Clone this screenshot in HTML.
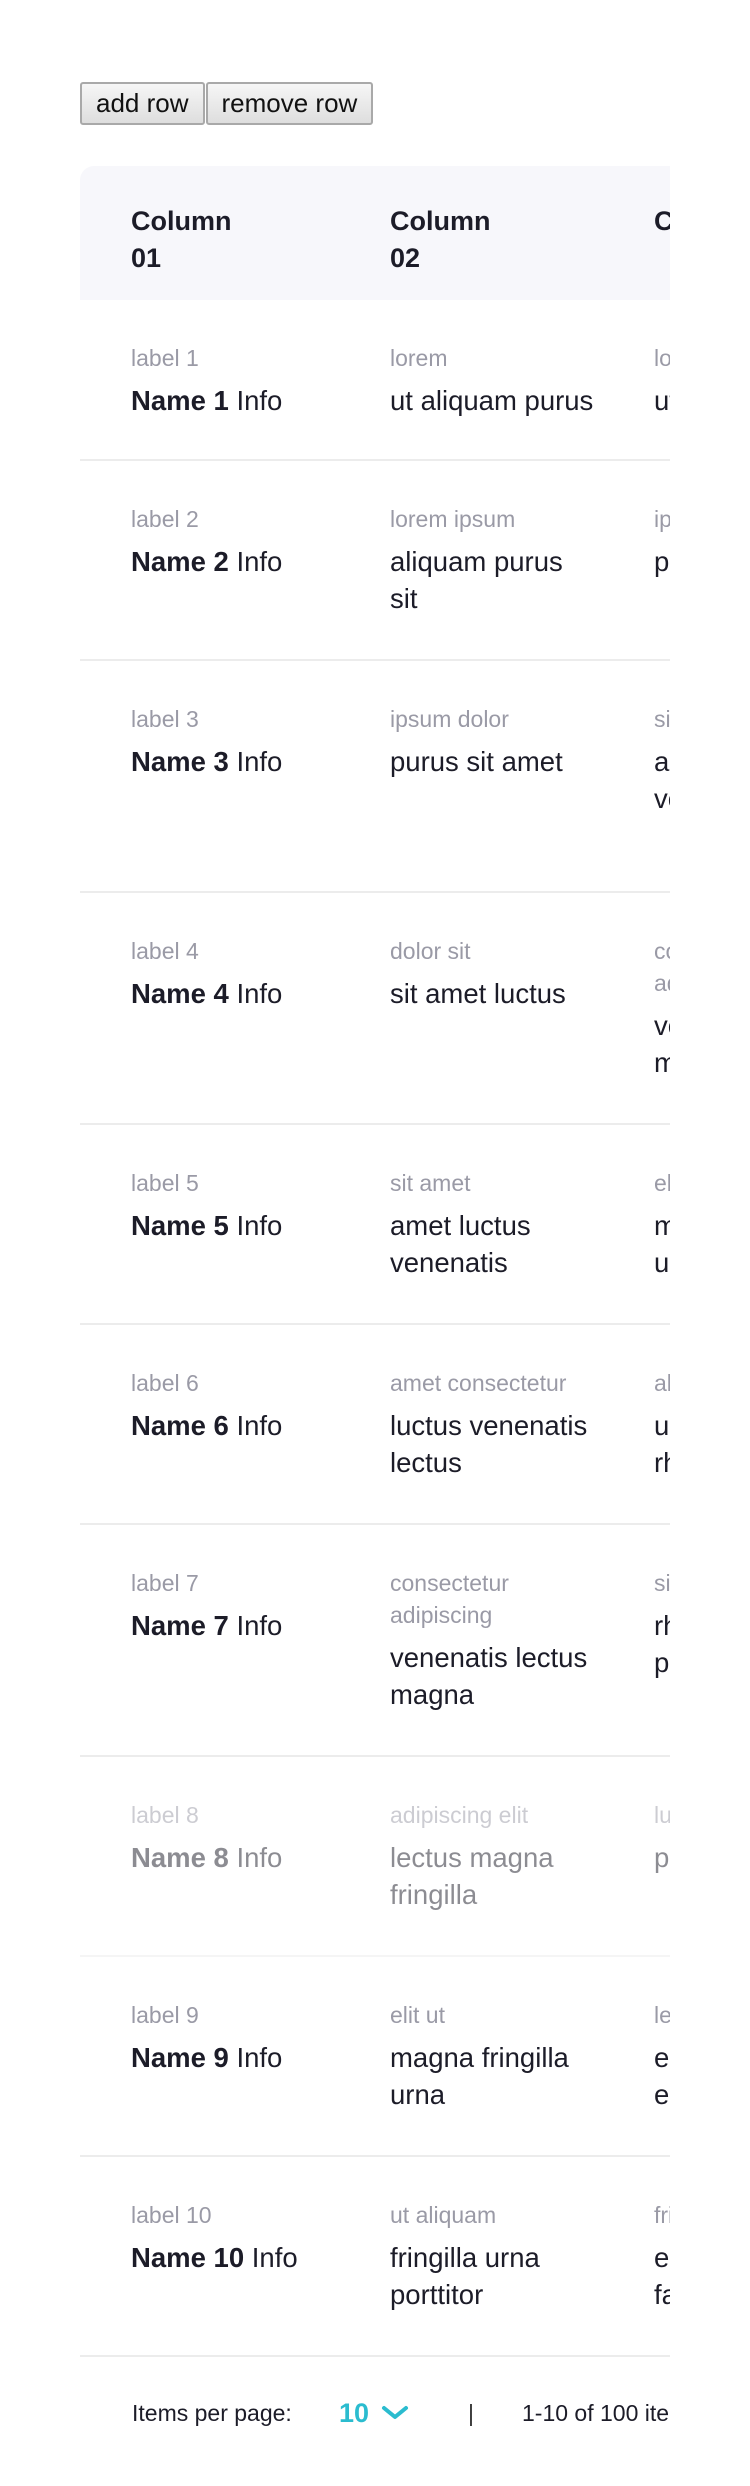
<!DOCTYPE html>
<html><head><meta charset="utf-8"><style>
*{margin:0;padding:0;box-sizing:border-box}
body{width:750px;height:2486px;background:#fff;font-family:"Liberation Sans",sans-serif;color:#1c1c28;position:relative;overflow:hidden}
.btns{position:absolute;left:80px;top:82px;display:flex}
.btns button{height:43px;font-family:"Liberation Sans",sans-serif;font-size:26px;color:#111;background:linear-gradient(#f6f6f6,#dedede);border:2px solid #a9a9a9;border-radius:3px;padding:0 14px}
.btns button+button{margin-left:1px}
.wrap{position:absolute;left:80px;top:166px;width:590px;overflow:hidden;height:2290px}
.head{height:134px;background:#f7f7fb;border-top-left-radius:14px;position:relative}
.head div{position:absolute;top:37px;font-weight:bold;font-size:27px;line-height:37px;width:200px}
.row{position:relative;border-bottom:2px solid #ececec}
.c{position:absolute;top:42px;width:215px}
.l{font-size:23px;line-height:32px;color:#9a9aa6}
.v{font-size:27.5px;line-height:37px;margin-top:8px;white-space:nowrap}
.fade{opacity:.5}
.foot{position:absolute;top:2395px;left:0;width:670px;height:36px;overflow:hidden;font-size:23px;line-height:36px}
.foot span{position:absolute;white-space:nowrap}
</style></head><body>
<div class="btns"><button>add row</button><button>remove row</button></div>
<div class="wrap">
<div class="head"><div style="left:51px">Column<br>01</div><div style="left:310px">Column<br>02</div><div style="left:574px">Column</div></div>

<div class="row" style="height:161px"><div class="c" style="left:51px"><div class="l">label 1</div><div class="v"><b>Name 1</b> Info</div></div><div class="c" style="left:310px"><div class="l">lorem</div><div class="v">ut aliquam purus</div></div><div class="c" style="left:574px"><div class="l">lorem</div><div class="v">ut aliquam</div></div></div>

<div class="row" style="height:200px"><div class="c" style="left:51px"><div class="l">label 2</div><div class="v"><b>Name 2</b> Info</div></div><div class="c" style="left:310px"><div class="l">lorem ipsum</div><div class="v">aliquam purus<br>sit</div></div><div class="c" style="left:574px"><div class="l">ipsum</div><div class="v">purus</div></div></div>

<div class="row" style="height:232px"><div class="c" style="left:51px"><div class="l">label 3</div><div class="v"><b>Name 3</b> Info</div></div><div class="c" style="left:310px"><div class="l">ipsum dolor</div><div class="v">purus sit amet</div></div><div class="c" style="left:574px"><div class="l">sit</div><div class="v">amet<br>vel</div></div></div>

<div class="row" style="height:232px"><div class="c" style="left:51px"><div class="l">label 4</div><div class="v"><b>Name 4</b> Info</div></div><div class="c" style="left:310px"><div class="l">dolor sit</div><div class="v">sit amet luctus</div></div><div class="c" style="left:574px"><div class="l">consectetur<br>adipiscing</div><div class="v">venenatis<br>magna</div></div></div>

<div class="row" style="height:200px"><div class="c" style="left:51px"><div class="l">label 5</div><div class="v"><b>Name 5</b> Info</div></div><div class="c" style="left:310px"><div class="l">sit amet</div><div class="v">amet luctus<br>venenatis</div></div><div class="c" style="left:574px"><div class="l">elit</div><div class="v">magna<br>urna</div></div></div>

<div class="row" style="height:200px"><div class="c" style="left:51px"><div class="l">label 6</div><div class="v"><b>Name 6</b> Info</div></div><div class="c" style="left:310px"><div class="l">amet consectetur</div><div class="v">luctus venenatis<br>lectus</div></div><div class="c" style="left:574px"><div class="l">aliquam</div><div class="v">urna<br>rhoncus</div></div></div>

<div class="row" style="height:232px"><div class="c" style="left:51px"><div class="l">label 7</div><div class="v"><b>Name 7</b> Info</div></div><div class="c" style="left:310px"><div class="l">consectetur<br>adipiscing</div><div class="v">venenatis lectus<br>magna</div></div><div class="c" style="left:574px"><div class="l">sit</div><div class="v">rhoncus<br>purus</div></div></div>

<div class="row fade" style="height:200px"><div class="c" style="left:51px"><div class="l">label 8</div><div class="v"><b>Name 8</b> Info</div></div><div class="c" style="left:310px"><div class="l">adipiscing elit</div><div class="v">lectus magna<br>fringilla</div></div><div class="c" style="left:574px"><div class="l">luctus</div><div class="v">purus</div></div></div>

<div class="row" style="height:200px"><div class="c" style="left:51px"><div class="l">label 9</div><div class="v"><b>Name 9</b> Info</div></div><div class="c" style="left:310px"><div class="l">elit ut</div><div class="v">magna fringilla<br>urna</div></div><div class="c" style="left:574px"><div class="l">lectus</div><div class="v">eget<br>est</div></div></div>

<div class="row" style="height:200px"><div class="c" style="left:51px"><div class="l">label 10</div><div class="v"><b>Name 10</b> Info</div></div><div class="c" style="left:310px"><div class="l">ut aliquam</div><div class="v">fringilla urna<br>porttitor</div></div><div class="c" style="left:574px"><div class="l">fringilla</div><div class="v">eget<br>fames</div></div></div>
</div>
<div class="foot">
<span style="left:132px">Items per page:</span>
<span style="left:339px;color:#2bbccf;font-weight:bold;font-size:27px">10</span>
<svg style="position:absolute;left:381px;top:10px" width="28" height="16" viewBox="0 0 28 16"><path d="M3 3 L14 12 L25 3" fill="none" stroke="#2bbccf" stroke-width="4" stroke-linecap="round" stroke-linejoin="round"/></svg>
<span style="left:468px;color:#333">|</span>
<span style="left:522px">1-10 of 100 items</span>
</div>
</body></html>
